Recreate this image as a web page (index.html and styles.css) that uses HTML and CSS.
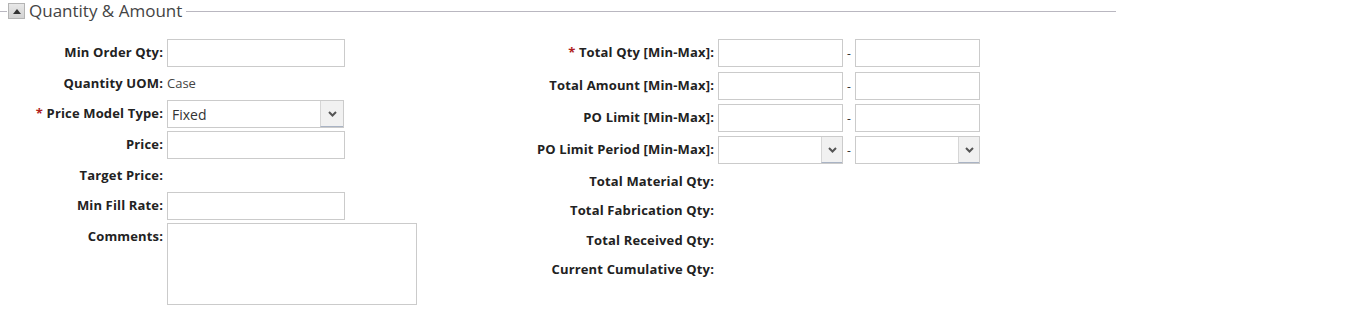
FILE: index.html
```html
<!DOCTYPE html>
<html lang="en">

<head>
    <meta charset="UTF-8">
    <meta name="viewport" content="width=device-width, initial-scale=1.0">
    <title>Quantity &amp; Amount</title>
    <link rel="stylesheet" href="styles.css">
</head>

<body>
    <section class="section">
        <!-- 섹션 제목 -->
        <div class="section-head">
            <span class="head-dash"></span>
            <button type="button" class="btn-toggle" aria-label="collapse">
                <svg width="8" height="5" viewBox="0 0 8 5"><path d="M0 5 L4 0 L8 5 Z" fill="#333" /></svg>
            </button>
            <h2 class="section-title">Quantity &amp; Amount</h2>
            <span class="head-line"></span>
        </div>

        <div class="section-body">
            <!-- 왼쪽 -->
            <div class="col col-left">
                <div class="row">
                    <label class="lbl">Min Order Qty:</label>
                    <input type="text" class="inp">
                </div>
                <div class="row row-text">
                    <span class="lbl">Quantity UOM:</span>
                    <span class="val">Case</span>
                </div>
                <div class="row">
                    <label class="lbl"><i class="req">*</i> Price Model Type:</label>
                    <div class="select">
                        <span class="select-value">Fixed</span>
                        <span class="select-arrow">
                            <svg width="9" height="6" viewBox="0 0 9 6"><path d="M1 1 L4.5 4.5 L8 1" fill="none" stroke="#555" stroke-width="2" /></svg>
                        </span>
                    </div>
                </div>
                <div class="row">
                    <label class="lbl">Price:</label>
                    <input type="text" class="inp">
                </div>
                <div class="row row-text">
                    <span class="lbl">Target Price:</span>
                </div>
                <div class="row">
                    <label class="lbl">Min Fill Rate:</label>
                    <input type="text" class="inp">
                </div>
                <div class="row row-area">
                    <label class="lbl">Comments:</label>
                    <textarea class="txt"></textarea>
                </div>
            </div>

            <!-- 오른쪽 -->
            <div class="col col-right">
                <div class="row row-first">
                    <label class="lbl"><i class="req">*</i> Total Qty [Min-Max]:</label>
                    <input type="text" class="inp inp-sm">
                    <span class="dash">-</span>
                    <input type="text" class="inp inp-sm">
                </div>
                <div class="row">
                    <label class="lbl">Total Amount [Min-Max]:</label>
                    <input type="text" class="inp inp-sm">
                    <span class="dash">-</span>
                    <input type="text" class="inp inp-sm">
                </div>
                <div class="row">
                    <label class="lbl">PO Limit [Min-Max]:</label>
                    <input type="text" class="inp inp-sm">
                    <span class="dash">-</span>
                    <input type="text" class="inp inp-sm">
                </div>
                <div class="row">
                    <label class="lbl">PO Limit Period [Min-Max]:</label>
                    <div class="select select-sm">
                        <span class="select-value"></span>
                        <span class="select-arrow">
                            <svg width="9" height="6" viewBox="0 0 9 6"><path d="M1 1 L4.5 4.5 L8 1" fill="none" stroke="#555" stroke-width="2" /></svg>
                        </span>
                    </div>
                    <span class="dash">-</span>
                    <div class="select select-sm">
                        <span class="select-value"></span>
                        <span class="select-arrow">
                            <svg width="9" height="6" viewBox="0 0 9 6"><path d="M1 1 L4.5 4.5 L8 1" fill="none" stroke="#555" stroke-width="2" /></svg>
                        </span>
                    </div>
                </div>
                <div class="row row-text">
                    <span class="lbl">Total Material Qty:</span>
                </div>
                <div class="row row-text">
                    <span class="lbl">Total Fabrication Qty:</span>
                </div>
                <div class="row row-text">
                    <span class="lbl">Total Received Qty:</span>
                </div>
                <div class="row row-text">
                    <span class="lbl">Current Cumulative Qty:</span>
                </div>
            </div>
        </div>
    </section>
</body>

</html>
```

FILE: styles.css
```css
html {
    font-size: 10px;
}

body {
    margin: 0;
    font-family: "Open Sans", "Noto Sans", sans-serif;
    color: #222;
    background: #fff;
}

button {
    cursor: pointer;
}

.section {
    width: 1116px;
}

/* 제목 줄 */
.section-head {
    display: flex;
    align-items: center;
    height: 22px;
}

.head-dash {
    width: 7px;
    height: 1px;
    background: #b9b7c0;
}

.head-line {
    flex: 1;
    height: 1px;
    margin-left: 4px;
    background: #b9b7c0;
}

.btn-toggle {
    width: 17px;
    height: 16px;
    margin: 0 4px 0 1px;
    padding: 0;
    display: flex;
    align-items: center;
    justify-content: center;
    border: 1px solid #b4b4b4;
    background: linear-gradient(#e8e8e8, #d2d2d2);
}

.section-title {
    margin: 0;
    font-size: 17px;
    font-weight: normal;
    color: #444;
    line-height: 22px;
}

/* 본문 */
.section-body {
    display: flex;
    padding-top: 16px;
}

.col-left {
    width: 520px;
}

.row {
    display: flex;
    align-items: center;
    height: 30px;
    margin-bottom: 1px;
}

.row-text {
    margin-bottom: 0;
}

.row-area {
    align-items: flex-start;
    height: auto;
    padding-top: 1px;
}

.lbl {
    flex: none;
    width: 163px;
    margin-right: 4px;
    padding-bottom: 2px;
    text-align: right;
    font-size: 13px;
    font-weight: bold;
    letter-spacing: 0.15px;
    color: #222;
    white-space: nowrap;
}

.row-area .lbl {
    padding-top: 4px;
}

.req {
    font-style: normal;
    color: #b01e1e;
}

.val {
    font-size: 13px;
    color: #444;
    padding-bottom: 2px;
}

.inp {
    box-sizing: border-box;
    width: 178px;
    height: 28px;
    margin: 0;
    border: 1px solid #cbcbcb;
    background: #fff;
    outline: none;
}

.txt {
    box-sizing: border-box;
    width: 250px;
    height: 82px;
    margin: 0;
    border: 1px solid #cbcbcb;
    resize: none;
    outline: none;
}

/* 셀렉트 박스 */
.select {
    box-sizing: border-box;
    display: flex;
    width: 177px;
    height: 28px;
    border: 1px solid #cbcbcb;
    background: #fff;
}

.select-value {
    flex: 1;
    padding-left: 4px;
    font-size: 14px;
    line-height: 27px;
    color: #333;
}

.select-arrow {
    width: 22px;
    display: flex;
    align-items: center;
    justify-content: center;
    border-left: 1px solid #d6d6d6;
    border-bottom: 1px solid #a9b3c4;
    background: #f1f1f1;
}

/* 오른쪽 */
.col-right .row {
    margin-bottom: 2px;
}

.col-right .row-first {
    margin-bottom: 3px;
}

.col-right .row-text {
    height: 29.5px;
    margin-bottom: 0;
}

.col-right .lbl {
    width: 194px;
}

.inp-sm {
    width: 125px;
}

.select-sm {
    width: 125px;
}

.select-sm .select-arrow {
    width: 20px;
}

.dash {
    width: 12px;
    text-align: center;
    font-size: 12px;
    color: #333;
}
```
